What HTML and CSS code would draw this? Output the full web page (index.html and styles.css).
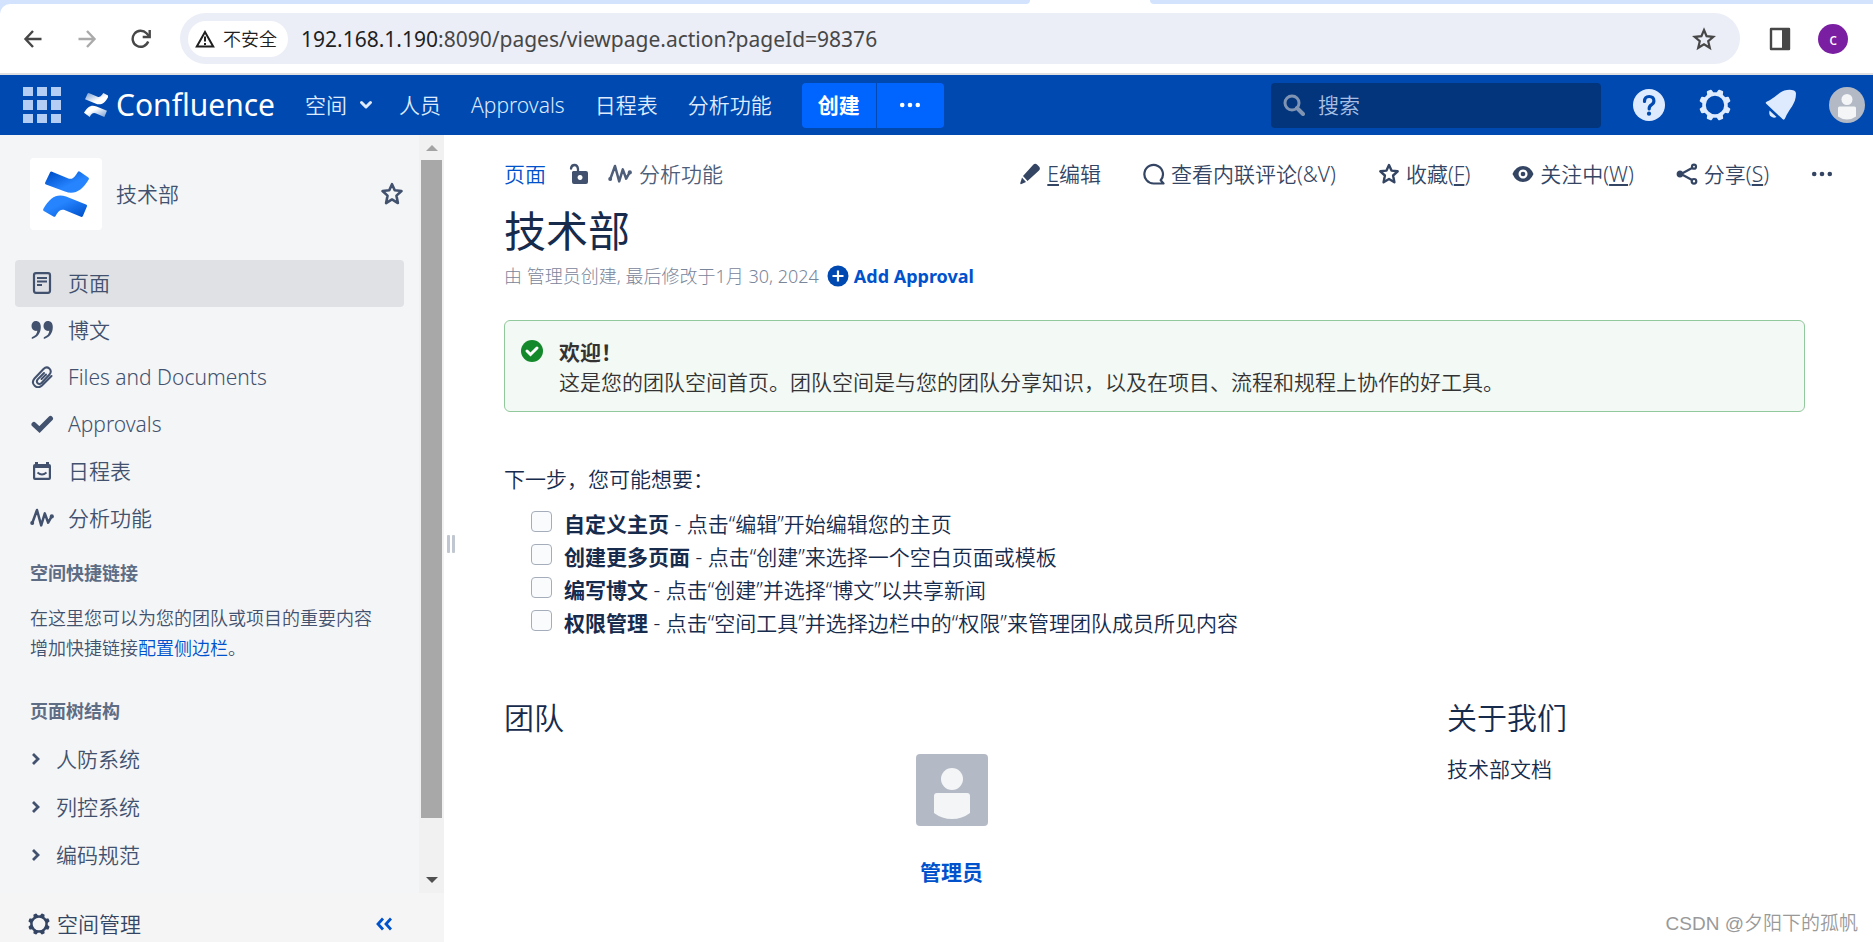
FILE: index.html
```html
<!DOCTYPE html>
<html lang="zh-CN">
<head>
<meta charset="utf-8">
<title>技术部 - Confluence</title>
<link rel="stylesheet" href="styles.css">
</head>
<body>
<svg class="defs" aria-hidden="true">
  <defs>
    <linearGradient id="blueTop" x1="0" y1="0" x2="1" y2="1"><stop offset="0.1" stop-color="#0052cc"/><stop offset="0.6" stop-color="#2684ff"/></linearGradient>
    <linearGradient id="blueBottom" x1="1" y1="1" x2="0" y2="0"><stop offset="0.05" stop-color="#0052cc"/><stop offset="0.6" stop-color="#2684ff"/></linearGradient>
    <linearGradient id="whiteTop" x1="0" y1="0" x2="1" y2="1"><stop offset="0" stop-color="#fff" stop-opacity="0.45"/><stop offset="0.6" stop-color="#fff"/></linearGradient>
    <linearGradient id="whiteBottom" x1="1" y1="1" x2="0" y2="0"><stop offset="0" stop-color="#fff" stop-opacity="0.45"/><stop offset="0.6" stop-color="#fff"/></linearGradient>
    <symbol id="gear" viewBox="0 0 32 32"><circle cx="16" cy="16" r="11" fill="none" stroke="currentColor" stroke-width="3.600"/><g fill="currentColor"><path id="tooth" d="M12.400 5l.9-3.800q.2-1 1-1h3.400q.8 0 1 1l.9 3.800z" transform="rotate(22.500 16 16)"/><use href="#tooth" transform="rotate(45 16 16)"/><use href="#tooth" transform="rotate(90 16 16)"/><use href="#tooth" transform="rotate(135 16 16)"/><use href="#tooth" transform="rotate(180 16 16)"/><use href="#tooth" transform="rotate(225 16 16)"/><use href="#tooth" transform="rotate(270 16 16)"/><use href="#tooth" transform="rotate(315 16 16)"/></g></symbol>
    <symbol id="star" viewBox="0 0 22 22"><path d="M11 2l2.500 5.600 6.200.7-4.600 4.200 1.300 6.800L11 16l-5.400 3.300 1.300-6.800-4.600-4.200 6.200-.7z" fill="none" stroke="currentColor" stroke-width="2.400" stroke-linejoin="round"/></symbol>
    <symbol id="pulse" viewBox="0 0 24 22"><path d="M2.200 16.200L7 3l4.200 15.400 3.600-12 3.400 9.300 3.600-6.500" fill="none" stroke="currentColor" stroke-width="2.500" stroke-linejoin="round" stroke-linecap="round"/><circle cx="2.200" cy="16" r="2" fill="currentColor"/><circle cx="21.800" cy="9.400" r="2.100" fill="currentColor"/></symbol>
    <symbol id="person" viewBox="0 0 72 72"><rect width="72" height="72" fill="#b3bac5"/><circle cx="36" cy="25" r="11" fill="#f4f5f7"/><path d="M18 42q0-3 3-3h30q3 0 3 3v17q-8 6-18 6t-18-6z" fill="#f4f5f7"/></symbol>
    <symbol id="chev" viewBox="0 0 10 14"><path d="M2 2l5 5-5 5" fill="none" stroke="currentColor" stroke-width="2.800"/></symbol>
    <symbol id="dots" viewBox="0 0 22 22"><circle cx="3.200" cy="11" r="2.300"/><circle cx="11" cy="11" r="2.300"/><circle cx="18.800" cy="11" r="2.300"/></symbol>
  </defs>
</svg>

<div class="browser">
  <div class="tabstrip"><span class="strip strip-left"></span><span class="strip strip-right"></span></div>
  <div class="toolbar">
    <div class="history">
      <button class="plain" aria-label="后退"><svg width="20" height="20" viewBox="0 0 20 20" fill="none" stroke="#474747" stroke-width="2.400"><path d="M18.500 10H3M10 2L2.500 10l7.500 8"/></svg></button>
      <button class="plain" aria-label="前进"><svg width="20" height="20" viewBox="0 0 20 20" fill="none" stroke="#aaa" stroke-width="2.400"><path d="M1.500 10H17M10 2l7.500 8-7.500 8"/></svg></button>
      <button class="plain" aria-label="刷新"><svg width="20" height="20" viewBox="0 0 20 20" fill="none" stroke="#474747" stroke-width="2.400"><path d="M17.200 12.500A8 8 0 1 1 15.500 4.300L18 7"/><path d="M18.700 1v7h-7"/></svg></button>
    </div>
    <div class="omnibox">
      <button class="chip"><svg width="22" height="20" viewBox="0 0 22 20"><path d="M11 3L2.800 17.500h16.400z" fill="none" stroke="#1f1f1f" stroke-width="2"/><path d="M11 7.500v5M11 14v2" stroke="#1f1f1f" stroke-width="2"/></svg>不安全</button>
      <div class="url"><span class="host">192.168.1.190</span>:8090/pages/viewpage.action?pageId=98376</div>
      <button class="plain" aria-label="收藏此页"><svg width="24" height="24" viewBox="0 0 24 24"><path d="M12 3l2.600 6.200 6.700.6-5.100 4.400 1.600 6.600-5.800-3.600-5.800 3.600 1.600-6.600-5.100-4.400 6.700-.6z" fill="none" stroke="#474747" stroke-width="2.200"/></svg></button>
    </div>
    <button class="plain side-toggle" aria-label="侧边栏"><svg width="22" height="24" viewBox="0 0 22 24"><path d="M2 2h18v20H2z" fill="none" stroke="#474747" stroke-width="2.400" stroke-linejoin="round"/><path d="M13 2h7v20h-7z" fill="#474747"/></svg></button>
    <button class="profile">c</button>
  </div>
</div>

<header class="header">
  <button class="plain grid-btn" aria-label="应用程序"><svg width="38" height="36" viewBox="0 0 38 36" fill="#b3cdf5"><rect width="10" height="9"/><rect x="14" width="10" height="9"/><rect x="28" width="10" height="9"/><rect y="13" width="10" height="10"/><rect x="14" y="13" width="10" height="10"/><rect x="28" y="13" width="10" height="10"/><rect y="27" width="10" height="9"/><rect x="14" y="27" width="10" height="9"/><rect x="28" y="27" width="10" height="9"/></svg></button>
  <a class="brand" href="#"><svg width="24" height="24" viewBox="0 0 46 46"><path d="M7 1l2-1 17 7q5 2 9-4l2-3 9 5v3C39 21 31 24 22 20L2 12z" fill="url(#whiteTop)"/><path d="M0 38C7 25 15 22 24 26l20 8-5 12-17-7q-5-2-9 3l-2 4z" fill="url(#whiteBottom)"/></svg><span>Confluence</span></a>
  <nav class="topnav">
    <a href="#">空间<svg width="14" height="10" viewBox="0 0 14 10"><path d="M2.500 2.500L7 7l4.500-4.500" fill="none" stroke="currentColor" stroke-width="3" stroke-linecap="round" stroke-linejoin="round"/></svg></a>
    <a href="#">人员</a><a href="#">Approvals</a><a href="#">日程表</a><a href="#">分析功能</a>
  </nav>
  <div class="create"><button class="create-main">创建</button><button class="create-more" aria-label="从模板创建"><svg width="22" height="22" fill="#fff"><use href="#dots"/></svg></button></div>
  <label class="search"><svg width="22" height="22" viewBox="0 0 22 22" fill="none" stroke="#7f93b2"><circle cx="9" cy="9" r="7" stroke-width="3"/><path d="M14 14l6 6" stroke-width="4" stroke-linecap="round"/></svg><input type="text" placeholder="搜索" aria-label="搜索"></label>
  <div class="tools">
    <button class="plain" aria-label="帮助"><svg width="32" height="32" viewBox="0 0 32 32"><circle cx="16" cy="16" r="16" fill="#deebff"/><path d="M11.500 12.500q0-5 4.700-5t4.700 4.500q0 2.300-2.500 3.800t-2.200 4.200" fill="none" stroke="#0049b0" stroke-width="3.200" stroke-linecap="round"/><circle cx="16" cy="24.700" r="2.100" fill="#0049b0"/></svg></button>
    <button class="plain" aria-label="设置"><svg width="32" height="32"><use href="#gear"/></svg></button>
    <button class="plain" aria-label="通知"><svg width="32" height="32" viewBox="0 0 32 32" fill="#deebff"><path d="M1 14.500Q0 13.500 2 12.500C12 8 14 2 22 1q4-.5 7 .5 2 1 2 3c0 11-7 15-11 25q-1 2-2.500.5z"/><path d="M4.500 21.500l7 6.500q-3 1.500-5.500-.5t-1.500-6z"/></svg></button>
    <button class="plain" aria-label="用户菜单"><svg class="round" width="36" height="36"><use href="#person"/></svg></button>
  </div>
</header>

<div class="body">
  <aside class="sidebar">
    <div class="side-scroll">
      <div class="side-content">
        <div class="space">
          <a class="space-logo" href="#" aria-label="技术部"><svg width="46" height="46" viewBox="0 0 46 46"><path d="M7 1.500q.6-1.300 2-.8l17 7q4 1 7-4l2-3q.8-1 2 0l8.300 5.800q1 .7.400 2C39 20 31 24 22 20.500L3 13.500q-1.400-.8-.8-2z" fill="url(#blueTop)"/><path d="M.3 38C7 26 14 22.500 23 25.500l20 8q1.400.7.900 2l-4 9.500q-.7 1.300-2 .8l-17-7q-4-1-7 4l-1.500 2.500q-.8 1-2 .2L.8 40q-1-.8-.5-2z" fill="url(#blueBottom)"/></svg></a>
          <a class="space-name" href="#">技术部</a>
          <button class="plain" aria-label="收藏空间"><svg width="24" height="24"><use href="#star"/></svg></button>
        </div>
        <nav class="side-nav">
          <a class="active" href="#"><svg width="22" height="22" viewBox="0 0 22 22" fill="none" stroke="currentColor"><rect x="3" y="1.200" width="16" height="19.600" rx="2" stroke-width="2.200"/><path d="M6 6h10M6 9.500h10M6 13h5" stroke-width="2"/></svg>页面</a>
          <a href="#"><svg width="22" height="22" viewBox="0 0 22 22" fill="currentColor"><path id="quote" d="M4.800 2C7.800 2 9.800 4 9.800 8c0 6-3.300 10.500-9 12v-1.700c3.500-1.300 5.300-3.500 5.500-6.500C3 12.500.5 10.500.5 7 .5 4 2.300 2 4.800 2z"/><use href="#quote" x="12"/></svg>博文</a>
          <a href="#"><svg width="22" height="22" viewBox="0 0 22 22" fill="none" stroke="currentColor" stroke-width="2" stroke-linecap="round"><path d="M20.500 10L11 19.500c-5 4.500-12-1.500-7.500-7L12.500 3c4-4 9.500 1 6 5.500L10.500 17c-3 2.500-6-.8-3.800-3.600L13 7"/><path d="M10.500 13L15 8.500"/></svg>Files and Documents</a>
          <a href="#"><svg width="22" height="22" viewBox="0 0 22 22"><path d="M3 11.500l5.500 5L19.500 5.500" fill="none" stroke="currentColor" stroke-width="5" stroke-linecap="round"/></svg>Approvals</a>
          <a href="#"><svg width="22" height="22" viewBox="0 0 22 22"><path fill-rule="evenodd" fill="currentColor" d="M4 4V2h3v2h8V2h3v2q2 0 2 2v12q0 2-2 2H4q-2 0-2-2V6q0-2 2-2zM4.200 8v9.800h13.600V8z"/><path d="M6.500 12.500q4.500 4 9 0" fill="none" stroke="currentColor" stroke-width="1.800"/></svg>日程表</a>
          <a href="#"><svg width="24" height="22"><use href="#pulse"/></svg>分析功能</a>
        </nav>
        <h2>空间快捷链接</h2>
        <p>在这里您可以为您的团队或项目的重要内容增加快捷链接<a href="#">配置侧边栏</a>。</p>
        <h2>页面树结构</h2>
        <ul class="tree">
          <li><a href="#"><svg width="10" height="14"><use href="#chev"/></svg>人防系统</a></li>
          <li><a href="#"><svg width="10" height="14"><use href="#chev"/></svg>列控系统</a></li>
          <li><a href="#"><svg width="10" height="14"><use href="#chev"/></svg>编码规范</a></li>
        </ul>
      </div>
      <div class="scrollbar" aria-hidden="true"><svg width="12" height="6" viewBox="0 0 12 6"><path d="M6 0l6 6H0z" fill="#a3a3a3"/></svg><div class="track"><div class="thumb"></div></div><svg width="12" height="6" viewBox="0 0 12 6"><path d="M0 0h12L6 6z" fill="#505050"/></svg></div>
    </div>
    <div class="side-foot">
      <a href="#"><svg width="22" height="22"><use href="#gear"/></svg>空间管理</a>
      <button class="plain collapse" aria-label="折叠侧边栏"><svg width="16" height="14" viewBox="0 0 16 14" fill="none" stroke="#0052cc" stroke-width="2.800"><path d="M7 1.500L2 7l5 5.500M15 1.500L10 7l5 5.500"/></svg></button>
    </div>
  </aside>
  <div class="splitter" aria-hidden="true"><span></span><span></span></div>

  <main class="main">
    <div class="pagebar">
      <div class="crumbs">
        <a href="#">页面</a>
        <button class="plain lock" aria-label="无限制"><svg width="22" height="22" viewBox="0 0 22 22"><path d="M3 5.500Q3.500 2 6.500 2T10 6v4" fill="none" stroke="currentColor" stroke-width="2.300" stroke-linecap="round"/><path fill="currentColor" fill-rule="evenodd" d="M5 8h13q2 0 2 2v9q0 2-2 2H6q-2 0-2-2V9zM12 12a2.500 2.500 0 1 0 .1 0z"/></svg></button>
        <a class="analytics" href="#"><svg width="24" height="22"><use href="#pulse"/></svg>分析功能</a>
      </div>
      <nav class="actions">
        <a href="#"><svg width="22" height="22" viewBox="0 0 22 22" fill="currentColor"><path d="M14 2q2-2 4-.5l2.500 2.500q1.200 2-.5 3.500L8.500 18 4 13z"/><path d="M3 14.500L7 19l-4.500 2Q1 21.500 1.300 20z"/></svg><span><u>E</u>编辑</span></a>
        <a href="#"><svg width="22" height="22" viewBox="0 0 22 22" fill="none" stroke="currentColor" stroke-width="2.200"><path d="M20.500 20.500H11a9.300 9.300 0 1 1 6.700-3.200z" stroke-linejoin="round"/></svg><span>查看内联评论(&amp;V)</span></a>
        <a href="#"><svg width="22" height="22"><use href="#star"/></svg><span>收藏(<u>F</u>)</span></a>
        <a href="#"><svg width="22" height="22" viewBox="0 0 22 22"><path fill="currentColor" fill-rule="evenodd" d="M.5 11Q4 3 11 3t10.500 8Q18 19 11 19T.5 11zM11 6.500a4.500 4.500 0 1 0 .1 0z"/><circle cx="11" cy="11" r="2.300" fill="currentColor"/></svg><span>关注中(<u>W</u>)</span></a>
        <a href="#"><svg width="22" height="22" viewBox="0 0 22 22" fill="none" stroke="currentColor" stroke-width="2.200"><path d="M17 4.500L5 11l12 6.500"/><circle cx="18" cy="3.700" r="2"/><circle cx="4" cy="11" r="2.300" fill="currentColor"/><circle cx="18" cy="18.300" r="2.300"/></svg><span>分享(<u>S</u>)</span></a>
        <button class="plain more" aria-label="更多"><svg width="22" height="22" fill="currentColor"><use href="#dots"/></svg></button>
      </nav>
    </div>
    <h1>技术部</h1>
    <div class="byline"><span>由 管理员创建, 最后修改于1月 30, 2024</span><a href="#"><svg width="22" height="22" viewBox="0 0 22 22"><circle cx="11" cy="11" r="10.500" fill="#0049b0"/><path d="M11 5.500v11M5.500 11h11" stroke="#fff" stroke-width="2.200"/></svg>Add Approval</a></div>

    <section class="panel">
      <svg width="22" height="22" viewBox="0 0 22 22"><circle cx="11" cy="11" r="11" fill="#14892c"/><path d="M6 11l3.500 3.500L16 8" fill="none" stroke="#fff" stroke-width="3" stroke-linecap="round"/></svg>
      <div><strong>欢迎！</strong><p>这是您的团队空间首页。团队空间是与您的团队分享知识，以及在项目、流程和规程上协作的好工具。</p></div>
    </section>

    <p class="next">下一步，您可能想要：</p>
    <ul class="tasks">
      <li><label><input type="checkbox"><span><b>自定义主页</b> - 点击“编辑”开始编辑您的主页</span></label></li>
      <li><label><input type="checkbox"><span><b>创建更多页面</b> - 点击“创建”来选择一个空白页面或模板</span></label></li>
      <li><label><input type="checkbox"><span><b>编写博文</b> - 点击“创建”并选择“博文”以共享新闻</span></label></li>
      <li><label><input type="checkbox"><span><b>权限管理</b> - 点击“空间工具”并选择边栏中的“权限”来管理团队成员所见内容</span></label></li>
    </ul>

    <div class="columns">
      <section><h2>团队</h2><div class="member"><svg width="72" height="72"><use href="#person"/></svg><a href="#">管理员</a></div></section>
      <section><h2>关于我们</h2><p>技术部文档</p></section>
    </div>
  </main>
</div>
<div class="watermark">CSDN @夕阳下的孤帆</div>
</body>
</html>
```
FILE: styles.css
```css
* { box-sizing: border-box; }
body {
  margin: 0;
  min-height: 100vh;
  display: flex;
  flex-direction: column;
  position: relative;
  background: #fff;
  color: #172b4d;
  font: 21px/30px "Noto Sans", "Noto Sans CJK SC", sans-serif;
  font-weight: 350;
}
a { color: #0052cc; text-decoration: none; }
h1, h2, p, ul { margin: 0; padding: 0; font-weight: 350; }
ul { list-style: none; }
svg { display: block; flex: none; }
button, input { font: inherit; }
.plain { border: 0; background: none; padding: 0; color: inherit; }
.defs { position: absolute; width: 0; height: 0; }

/* Browser bar */
.browser { border-bottom: 2px solid #e0e0e2; background: #d3e3fd; }
.tabstrip { display: flex; height: 4px; background: #fff; }
.strip { background: #d3e3fd; }
.strip-left { width: 55%; border-bottom-right-radius: 8px; }
.strip-right { flex: 1; margin-left: 120px; border-bottom-left-radius: 8px; }
.toolbar { display: flex; align-items: center; height: 69px; padding: 0 25px 0 23px; background: #fff; border-top-left-radius: 10px; }
.history { display: flex; gap: 34px; width: 157px; flex: none; }
.omnibox { flex: 1; display: flex; align-items: center; height: 51px; padding: 0 24px 0 8px; border-radius: 26px; background: #ebeef7; }
.chip { display: flex; align-items: center; gap: 7px; height: 36px; padding: 0 11px 0 6px; border: 0; border-radius: 18px; background: #fff; color: #1f1f1f; font-size: 18px; }
.url { flex: 1; padding-left: 13px; color: #474747; font-size: 21px; font-weight: 400; }
.host { color: #1f1f1f; }
.side-toggle { margin: 0 27px 0 29px; }
.profile { width: 30px; height: 30px; padding: 0; border: 0; border-radius: 50%; background: #7b1fa2; color: #fff; font-size: 16px; line-height: 28px; font-weight: 400; }

/* Application header */
.header { display: flex; align-items: center; height: 60px; padding: 0 8px 0 23px; background: #0049b0; color: #deebff; }
.brand { display: flex; align-items: center; gap: 8px; margin-left: 23px; color: #fff; font-size: 30px; font-weight: 400; }
.topnav { display: flex; gap: 30px; margin-left: 30px; }
.topnav a { display: flex; align-items: center; gap: 12px; color: #deebff; white-space: nowrap; }
.topnav a:first-child { margin-right: -4px; }
.create { display: flex; gap: 1px; margin-left: 30px; }
.create button { height: 45px; border: 0; background: #0065ff; color: #fff; font-weight: 700; }
.create-main { width: 74px; padding: 0; border-radius: 4px 0 0 4px; }
.create-more { width: 67px; padding: 0 22px; border-radius: 0 4px 4px 0; }
.search { display: flex; align-items: center; gap: 13px; width: 330px; height: 45px; margin-left: auto; padding: 0 12px; border-radius: 4px; background: #03357d; }
.search input { width: 100%; padding: 0; border: 0; outline: 0; background: none; color: #b3cdf5; }
.search input::placeholder { color: #a9c0e4; opacity: 1; }
.tools { display: flex; align-items: center; gap: 34px; margin-left: 32px; }
.tools .plain:last-child { margin-left: -2px; }
.round { border-radius: 50%; }

/* Sidebar */
.body { flex: 1; display: flex; }
.sidebar { display: flex; flex-direction: column; width: 444px; flex: none; background: #f4f5f7; color: #42526e; }
.side-scroll { flex: 1; display: flex; }
.side-content { flex: 1; padding: 23px 15px 14px; }
.space { display: flex; align-items: center; gap: 14px; padding: 0 0 0 15px; margin-bottom: 30px; }
.space-logo { display: flex; align-items: center; justify-content: center; width: 72px; height: 72px; border-radius: 4px; background: #fff; }
.space-name { flex: 1; color: #42526e; }
.side-nav a, .tree a { display: flex; align-items: center; color: #42526e; }
.side-nav a { height: 47px; padding: 0 0 1px 15px; border-radius: 4px; }
.side-nav svg { width: 24px; margin-right: 14px; }
.side-nav .active { background: #dfe1e5; }
.side-content h2 { margin: 16px 15px 15px; color: #5e6c84; font-size: 18px; font-weight: 700; }
.side-content p { margin: 0 15px 33px; font-size: 18px; line-height: 30px; }
.side-content p + h2 { margin-bottom: 9px; }
.tree a { gap: 15px; height: 48px; padding-left: 16px; }
.scrollbar { display: flex; flex-direction: column; align-items: center; width: 25px; padding: 10px 0; background: #f1f1f1; }
.track { flex: 1; width: 21px; padding: 9px 0; }
.thumb { height: 93%; background: #a8a8a8; }
.side-foot { display: flex; align-items: center; justify-content: space-between; height: 49px; padding: 12px 52px 0 28px; background: #f5f5f5; }
.side-foot a { display: flex; align-items: center; gap: 7px; color: #344563; }
.splitter { display: flex; align-items: center; gap: 2px; padding: 10px 0 0 3px; width: 12px; flex: none; }
.splitter span { width: 3px; height: 18px; border-radius: 1px; background: #c1c7d0; }

/* Page */
.main { flex: 1; min-width: 0; padding: 24px 68px 24px 48px; }
.pagebar { display: flex; justify-content: space-between; margin-right: -28px; }
.crumbs, .actions, .actions a, .analytics { display: flex; align-items: center; white-space: nowrap; }
.crumbs .lock { margin: 0 18px 0 22px; color: #42526e; }
.analytics { gap: 7px; color: #505f79; }
.actions { gap: 42px; color: #344563; }
.actions a { gap: 6px; color: #344563; }
.actions u { text-decoration-thickness: 2px; text-underline-offset: 2px; }
h1 { margin-top: 16px; font-size: 42px; line-height: 52px; font-weight: 400; }
.byline { display: flex; align-items: center; gap: 8px; margin-top: 4px; color: #7a869a; font-size: 18px; font-weight: 300; }
.byline a { display: flex; align-items: center; gap: 5px; font-weight: 700; }
.panel { display: flex; gap: 16px; margin-top: 29px; padding: 16px 16px 14px; border: 1px solid #91c89c; border-radius: 6px; background: #f3f9f4; color: #333; }
.panel svg { margin-top: 3px; }
.panel strong, .tasks b { font-weight: 700; }
.next { margin-top: 52px; }
.tasks { margin-top: 13px; }
.tasks label { display: flex; align-items: center; height: 33px; padding-left: 27px; }
.tasks input { appearance: none; width: 21px; height: 21px; margin: 0 12px 4px 0; border: 1px solid #a5adba; border-radius: 4px; background: #fafbfc; }
.columns { display: grid; grid-template-columns: 5fr 2fr; gap: 48px; margin-top: 61px; }
.columns h2 { font-size: 30px; line-height: 36px; margin-bottom: 18px; }
.member { display: flex; flex-direction: column; align-items: center; gap: 31px; }
.member svg { border-radius: 4px; }
.member a { font-weight: 700; }
.watermark { position: absolute; right: 15px; bottom: 3px; color: #999; font-family: "Liberation Sans", "Noto Sans CJK SC", sans-serif; font-size: 19px; }
```
